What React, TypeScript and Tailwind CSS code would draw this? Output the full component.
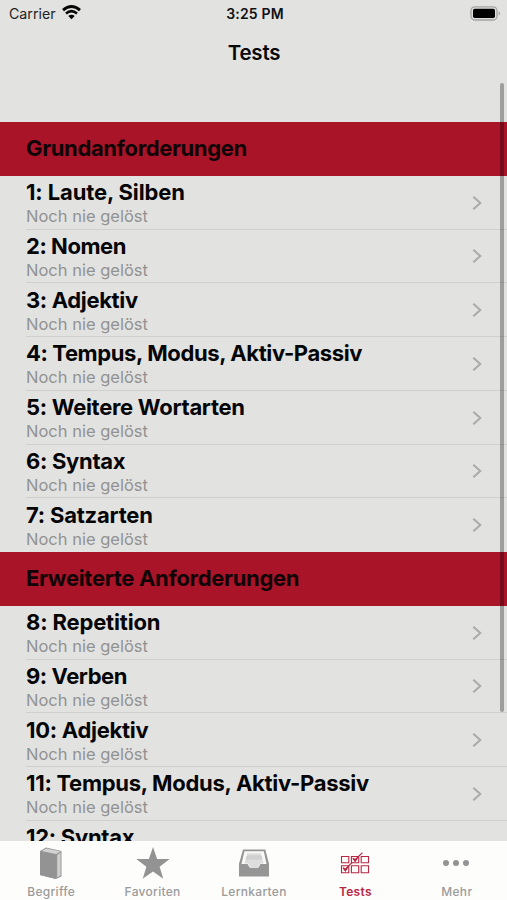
import React from "react";

// ==========================================
// DATA: TESTS
// ==========================================
const sections = [
    {
        title: "Grundanforderungen",
        spacing: "tracking-[-0.37px]",
        tests: [
            { title: "1: Laute, Silben", spacing: "tracking-[-0.12px]" },
            { title: "2: Nomen", spacing: "tracking-[-0.45px]" },
            { title: "3: Adjektiv", spacing: "tracking-[-0.35px]" },
            { title: "4: Tempus, Modus, Aktiv-Passiv", spacing: "tracking-[-0.38px]" },
            { title: "5: Weitere Wortarten", spacing: "tracking-[-0.3px]" },
            { title: "6: Syntax", spacing: "tracking-[-0.3px]" },
            { title: "7: Satzarten", spacing: "tracking-[-0.22px]" },
        ],
    },
    {
        title: "Erweiterte Anforderungen",
        spacing: "tracking-[-0.32px]",
        tests: [
            { title: "8: Repetition", spacing: "tracking-[-0.15px]" },
            { title: "9: Verben", spacing: "tracking-[-0.45px]" },
            { title: "10: Adjektiv", spacing: "tracking-[-0.27px]" },
            { title: "11: Tempus, Modus, Aktiv-Passiv", spacing: "tracking-[-0.28px]" },
            { title: "12: Syntax", spacing: "tracking-[-0.27px]" },
        ],
    },
];

const BookIcon = () => (
    <svg width="24" height="32" viewBox="0 0 24 32">
        <path d="M1 4 7 .5 22.5 4v25.5L17 32 1 28Z" fill="#969796" />
        <path d="M2.5 4 7.5 1.5 21.5 4.5 17 7Z" fill="#d2d3d2" />
        <path d="M18.3 8 21.5 5.5v23l-3.2 2Z" fill="#cfd0cf" />
        <path d="M1 4.2 17 7.8V32L1 28Z" fill="#929392" />
    </svg>
);

const StarIcon = () => (
    <svg width="34" height="32" viewBox="0 0 34 32">
        <path d="m17 0 4.1 11.9 12.6.2-10.1 7.7 3.7 12L17 24.6 6.7 31.8l3.7-12L.3 12.1l12.6-.2Z" fill="#929392" />
    </svg>
);

const TrayIcon = () => (
    <svg width="30" height="28" viewBox="0 0 30 28">
        <path d="M4 .5h22.3L30 14.8v12.7H0V14.8Z" fill="#959695" />
        <path d="M5.5 2.3h19.3L27.5 15h-6l-2.2 3.8h-8.5L8.5 15h-6Z" fill="#f9f9f8" />
        <path d="M8.2 4.3h13.9l.5 2H7.7Z" fill="#dededd" />
        <path d="M7.3 6.8h15.6l.6 3.2H6.6Z" fill="#d0d1d0" />
        <path d="M6.3 10.5h17.5l.8 4h-3.5l-2.3 3.8h-7.4L9.1 14.5H5.5Z" fill="#dcdddc" />
        <path d="M8 6.6h14M7 10.3h16" stroke="#bfc0bf" strokeWidth=".6" />
    </svg>
);

const ChecklistIcon = () => (
    <svg width="30" height="22" viewBox="0 0 30 22" fill="none" stroke="#b92743">
        <path d="M1.5 4.5h7.3v6.3H1.5ZM11.4 4.5h7.3v6.3h-7.3ZM21.2 4.5h7.3v6.3h-7.3ZM1.5 13.8h7.3v7H1.5ZM11.4 13.8h7.3v7h-7.3ZM21.2 13.8h7.3v7h-7.3Z" strokeWidth="1.1" />
        <path d="m12.8 6.5 2.4 2.7Q18 4 22.5.8M3 16l2.4 2.7Q8 13.5 12.5 10.3" strokeWidth="1.1" />
        <path d="m12.7 6 2.4 1 2.6-2.1-2.5 4.8ZM3 15.6l2.4 1L8 14.3l-2.6 5Z" fill="#b92743" strokeWidth=".5" />
    </svg>
);

const MoreIcon = () => (
    <svg width="28" height="8" viewBox="0 0 28 8" fill="#929392" className="-ml-[2px]">
        <circle cx="4" cy="4" r="3" />
        <circle cx="14" cy="4" r="3" />
        <circle cx="24" cy="4" r="3" />
    </svg>
);

const tabs = [
    { label: "Begriffe", icon: BookIcon, active: false },
    { label: "Favoriten", icon: StarIcon, active: false },
    { label: "Lernkarten", icon: TrayIcon, active: false },
    { label: "Tests", icon: ChecklistIcon, active: true },
    { label: "Mehr", icon: MoreIcon, active: false },
];

function StatusBar() {
    return (
        <div className="grid h-[27px] shrink-0 grid-cols-3 items-center pl-[9px] pr-[6px] text-[14.2px]">
            <div className="flex items-center gap-[6px] text-[#222]">
                <span>Carrier</span>
                <svg width="19" height="15" viewBox="0 0 19 15" fill="none" stroke="#050505" className="-mt-px">
                    <path d="M1 5.2Q9.5-2 18 5.2" strokeWidth="2.9" />
                    <path d="M4 8.5q5.5-4.8 11 0" strokeWidth="2.5" />
                    <path d="M6.3 11.1q3.2-2.7 6.4 0L9.5 14.3Z" fill="#050505" stroke="none" />
                </svg>
            </div>
            <div className="text-center text-[14px] font-semibold tracking-[0.15px] text-[#111]">3:25 PM</div>
            <svg width="31" height="15" viewBox="0 0 31 15" className="justify-self-end">
                <rect x="1" y=".8" width="26" height="13.2" rx="3.8" fill="#ddd" stroke="#a3a3a1" strokeWidth="1.3" />
                <rect x="3" y="2.8" width="22" height="9.2" rx="1.8" fill="#000" />
                <path d="M28.6 5.2q3 2.2 0 4.4Z" fill="#a3a3a1" />
            </svg>
        </div>
    );
}

function TestRow({ title, spacing, last }: { title: string; spacing: string; last: boolean }) {
    return (
        <div className="h-[53.75px] pl-[26px]">
            <div className={`flex h-full items-center justify-between border-b pr-[25px] ${last ? "border-transparent" : "border-[#d0d0cf]"}`}>
                <div className="pt-[2px]">
                    <div className={`whitespace-nowrap text-[22px] font-bold leading-[26px] text-[#050505] ${spacing}`}>{title}</div>
                    <div className="text-[16.5px] leading-[22px] text-[#929291]">Noch nie gelöst</div>
                </div>
                <svg width="10" height="15" viewBox="0 0 10 15" fill="none" stroke="#aaaaa9" strokeWidth="2">
                    <path d="m1.3 1.8 7 6.2-7 6.2" />
                </svg>
            </div>
        </div>
    );
}

export default function App() {
    return (
        <div className="relative flex h-[900px] w-[507px] flex-col overflow-hidden bg-[#e2e2e1] font-['Inter','Liberation_Sans',sans-serif]">
            <StatusBar />
            <h1 className="h-[95px] shrink-0 pl-px pt-[10px] text-center text-[20.5px] font-semibold leading-[31px] tracking-[-0.2px] text-[#080808]">Tests</h1>

            {/* Test list */}
            <main className="min-h-0 flex-1 overflow-hidden">
                {sections.map((section) => (
                    <section key={section.title}>
                        <h2 className={`flex h-[53.75px] items-center bg-[#a91429] pl-[26px] text-[22px] font-bold text-[#100407] ${section.spacing}`}>
                            {section.title}
                        </h2>
                        {section.tests.map((test, i) => (
                            <TestRow key={test.title} {...test} last={i === section.tests.length - 1} />
                        ))}
                    </section>
                ))}
            </main>

            {/* Tab bar */}
            <nav className="grid h-[59.5px] shrink-0 grid-cols-5 bg-[#fdfdfc]">
                {tabs.map(({ label, icon: Icon, active }) => (
                    <div key={label} className="flex flex-col items-center pl-px">
                        <div className="flex h-[44px] items-center pt-px">
                            <Icon />
                        </div>
                        <span className={`text-[12px] leading-[13px] tracking-[0.3px] ${active ? "font-semibold text-[#b92743]" : "font-medium text-[#9b9b9a]"}`}>{label}</span>
                    </div>
                ))}
            </nav>

            {/* Scroll indicator */}
            <div className="absolute right-[3px] top-[83px] h-[629px] w-[4px] rounded-full bg-black/30"></div>
        </div>
    );
}
